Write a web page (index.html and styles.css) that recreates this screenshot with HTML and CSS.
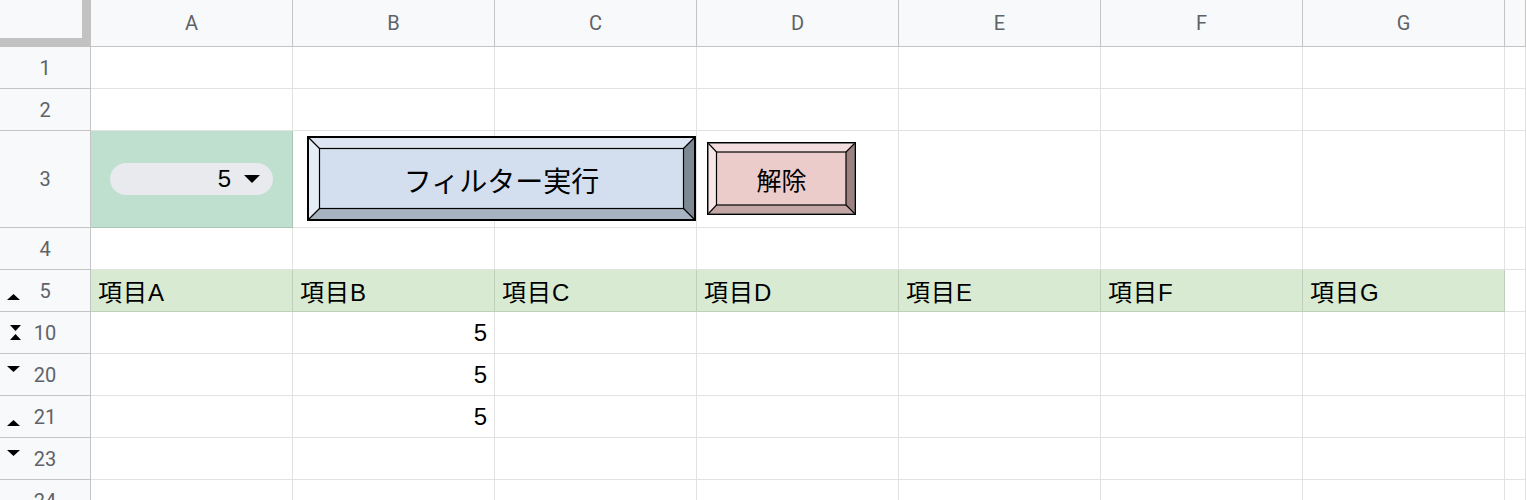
FILE: index.html
```html
<!DOCTYPE html>
<html lang="ja">
<head>
<meta charset="utf-8">
<title>Sheet</title>
<link rel="stylesheet" href="styles.css">
</head>
<body>
<div class="sheet">
  <div class="corner"></div>
  <div class="ch">A</div><div class="ch">B</div><div class="ch">C</div><div class="ch">D</div><div class="ch">E</div><div class="ch">F</div><div class="ch">G</div><div class="ch"></div>

  <div class="rh">1</div>
  <div class="c"></div><div class="c"></div><div class="c"></div><div class="c"></div><div class="c"></div><div class="c"></div><div class="c"></div><div class="c"></div>

  <div class="rh">2</div>
  <div class="c"></div><div class="c"></div><div class="c"></div><div class="c"></div><div class="c"></div><div class="c"></div><div class="c"></div><div class="c"></div>

  <div class="rh">3</div>
  <div class="c dd">
    <div class="chip"><span>5</span><svg class="caret" width="16" height="8" viewBox="0 0 16 8"><polygon points="0,0 16,0 8,8" fill="#000"/></svg></div>
  </div>
  <div class="c"></div><div class="c"></div><div class="c"></div><div class="c"></div><div class="c"></div><div class="c"></div><div class="c"></div>

  <div class="rh">4</div>
  <div class="c"></div><div class="c"></div><div class="c"></div><div class="c"></div><div class="c"></div><div class="c"></div><div class="c"></div><div class="c"></div>

  <div class="rh"><svg class="ico up" width="13" height="6" viewBox="0 0 13 6"><polygon points="0,6 13,6 6.5,0" fill="#000"/></svg>5</div>
  <div class="c g">項目A</div><div class="c g">項目B</div><div class="c g">項目C</div><div class="c g">項目D</div><div class="c g">項目E</div><div class="c g">項目F</div><div class="c g">項目G</div><div class="c"></div>

  <div class="rh"><svg class="ico hg" width="11" height="15" viewBox="0 0 11 15"><polygon points="0,0 11,0 5.5,6" fill="#000"/><polygon points="0,15 11,15 5.5,9" fill="#000"/></svg>10</div>
  <div class="c"></div><div class="c num">5</div><div class="c"></div><div class="c"></div><div class="c"></div><div class="c"></div><div class="c"></div><div class="c"></div>

  <div class="rh"><svg class="ico down" width="13" height="6" viewBox="0 0 13 6"><polygon points="0,0 13,0 6.5,6" fill="#000"/></svg>20</div>
  <div class="c"></div><div class="c num">5</div><div class="c"></div><div class="c"></div><div class="c"></div><div class="c"></div><div class="c"></div><div class="c"></div>

  <div class="rh"><svg class="ico up" width="13" height="6" viewBox="0 0 13 6"><polygon points="0,6 13,6 6.5,0" fill="#000"/></svg>21</div>
  <div class="c"></div><div class="c num">5</div><div class="c"></div><div class="c"></div><div class="c"></div><div class="c"></div><div class="c"></div><div class="c"></div>

  <div class="rh"><svg class="ico down" width="13" height="6" viewBox="0 0 13 6"><polygon points="0,0 13,0 6.5,6" fill="#000"/></svg>23</div>
  <div class="c"></div><div class="c"></div><div class="c"></div><div class="c"></div><div class="c"></div><div class="c"></div><div class="c"></div><div class="c"></div>

  <div class="rh">24</div>
  <div class="c"></div><div class="c"></div><div class="c"></div><div class="c"></div><div class="c"></div><div class="c"></div><div class="c"></div><div class="c"></div>

  <div class="btn btn-run">
    <svg class="frame" width="389" height="85" viewBox="0 0 389 85">
      <polygon points="2,2 387,2 377,12 12,12" fill="#dce5f1"/>
      <polygon points="2,2 12,12 12,73 2,83" fill="#e7edf6"/>
      <polygon points="387,2 387,83 377,73 377,12" fill="#7e8894"/>
      <polygon points="2,83 12,73 377,73 387,83" fill="#a8b3c1"/>
      <rect x="12.5" y="12.5" width="364" height="60" fill="#d3dfee" stroke="#000" stroke-width="1.2"/>
      <g stroke="#000" stroke-width="1.2">
        <line x1="2" y1="2" x2="12.5" y2="12.5"/>
        <line x1="387" y1="2" x2="376.5" y2="12.5"/>
        <line x1="2" y1="83" x2="12.5" y2="72.5"/>
        <line x1="387" y1="83" x2="376.5" y2="72.5"/>
      </g>
      <rect x="1" y="1" width="387" height="83" fill="none" stroke="#000" stroke-width="2"/>
    </svg>
    <span class="label">フィルター実行</span>
  </div>

  <div class="btn btn-clear">
    <svg class="frame" width="149" height="73" viewBox="0 0 149 73">
      <polygon points="1.5,1.5 147.5,1.5 139,10 9.5,10" fill="#f2dcdc"/>
      <polygon points="1.5,1.5 9.5,10 9.5,63 1.5,71.5" fill="#f7e6e6"/>
      <polygon points="147.5,1.5 147.5,71.5 139,63 139,10" fill="#9c8180"/>
      <polygon points="1.5,71.5 9.5,63 139,63 147.5,71.5" fill="#c4a6a5"/>
      <rect x="9.5" y="10" width="129.5" height="53" fill="#ecccca" stroke="#000" stroke-width="1.2"/>
      <g stroke="#000" stroke-width="1.1">
        <line x1="1.5" y1="1.5" x2="9.5" y2="10"/>
        <line x1="147.5" y1="1.5" x2="139" y2="10"/>
        <line x1="1.5" y1="71.5" x2="9.5" y2="63"/>
        <line x1="147.5" y1="71.5" x2="139" y2="63"/>
      </g>
      <rect x="0.75" y="0.75" width="147.5" height="71.5" fill="none" stroke="#000" stroke-width="1.5"/>
    </svg>
    <span class="label">解除</span>
  </div>
</div>
</body>
</html>
```

FILE: styles.css
```css
* { box-sizing: border-box; }

html, body {
  margin: 0;
  padding: 0;
  background: #ffffff;
  overflow: hidden;
}

.sheet {
  position: relative;
  display: grid;
  grid-template-columns: 91px repeat(7, 202px) 1fr;
  grid-template-rows: 47px 42px 42px 97px repeat(7, 42px);
  width: 1526px;
  font-family: "Liberation Sans", "Noto Sans CJK JP", sans-serif;
  font-size: 24px;
  color: #000;
}

.corner {
  background: #f8f9fa;
  border-right: 9px solid #c2c2c2;
  border-bottom: 9px solid #c2c2c2;
}

.ch,
.rh {
  background: #f8f9fa;
  border-right: 1px solid #c4c4c4;
  border-bottom: 1px solid #c4c4c4;
  display: flex;
  align-items: center;
  justify-content: center;
  font-family: Roboto, "Noto Sans", sans-serif;
  font-size: 20px;
  color: #5f6368;
}

.rh {
  position: relative;
}

.ico {
  position: absolute;
  left: 7px;
}
.ico.up { top: 24px; }
.ico.down { top: 12px; }
.ico.hg { top: 13px; left: 10px; }

.c {
  border-right: 1px solid rgba(0, 0, 0, 0.115);
  border-bottom: 1px solid rgba(0, 0, 0, 0.115);
  display: flex;
  align-items: center;
  padding: 0 7px;
  white-space: nowrap;
  overflow: hidden;
}

.c.g {
  background: #d9ead3;
  letter-spacing: 1px;
}

.c.num {
  justify-content: flex-end;
}

.c.dd {
  background: #bfdfcf;
  padding: 0 0 0 19px;
}

.chip {
  width: 163px;
  height: 32px;
  border-radius: 16px;
  background: #e8eaed;
  display: flex;
  align-items: center;
  justify-content: flex-end;
  gap: 13px;
  padding-right: 13px;
  font-size: 24px;
}

.caret {
  display: block;
}

.btn {
  position: absolute;
  display: grid;
  place-items: center;
}

.btn > .frame,
.btn > .label {
  grid-area: 1 / 1;
}

.frame {
  display: block;
}

.btn .label {
  font-family: "Noto Sans CJK JP", sans-serif;
  color: #000;
  line-height: 1;
}

.btn-run {
  left: 307px;
  top: 136px;
}
.btn-run .label {
  font-size: 28px;
  margin-top: 2px;
}

.btn-clear {
  left: 707px;
  top: 142px;
}
.btn-clear .label {
  font-size: 25px;
  margin-top: 2px;
}
```
